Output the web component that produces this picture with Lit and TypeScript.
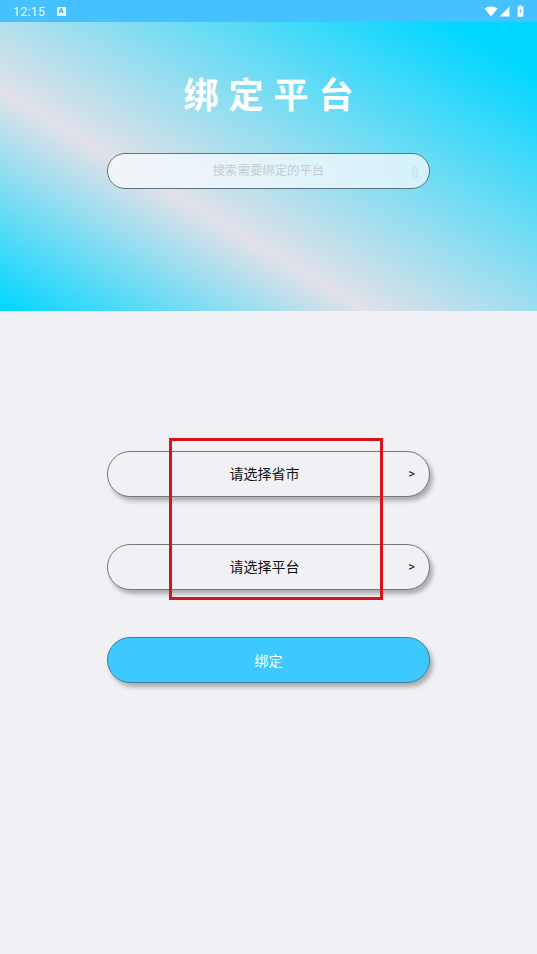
import { LitElement, html, css } from "lit";
import { customElement } from "lit/decorators.js";

@customElement("app-root")
export class AppRoot extends LitElement {
  static styles = css`
    :host {
      display: block;
      position: relative;
      width: 537px;
      height: 954px;
      overflow: hidden;
      background: #f0f0f5;
      font-family: "Noto Sans CJK SC", Roboto, sans-serif;
    }
    .status {
      height: 22px;
      box-sizing: border-box;
      background: #45c1ff;
      display: flex;
      align-items: center;
      padding: 0 13px 0 13px;
      color: #eaf8ff;
      font-family: Roboto, sans-serif;
      font-size: 12.5px;
      letter-spacing: 0.2px;
    }
    .time { width: 43.5px; }
    .a-badge {
      width: 9px;
      height: 9px;
      border-radius: 1px;
      background: #e6f6ff;
      color: #45a0d8;
      font-size: 7px;
      font-weight: 700;
      letter-spacing: 0;
      line-height: 9px;
      text-align: center;
    }
    .status-icons {
      margin-left: auto;
      display: flex;
      align-items: center;
    }
    .status-icons svg { display: block; }
    .signal { margin-left: 1px; }
    .battery { margin-left: 7px; }
    .hero {
      height: 289px;
      box-sizing: border-box;
      padding-top: 48px;
      background: linear-gradient(31deg, #00d6ff 0%, #e1e1e8 36%, #00d6ff 92%);
      display: flex;
      flex-direction: column;
      align-items: center;
    }
    .title {
      margin: 0;
      color: #fff;
      font-size: 35px;
      line-height: 46px;
      font-weight: 700;
      letter-spacing: 10px;
      padding-left: 10px;
    }
    .search {
      margin-top: 37px;
      position: relative;
      width: 323px;
      height: 36px;
      box-sizing: border-box;
      border: 1px solid #5f7480;
      border-radius: 18px;
      background: linear-gradient(90deg, rgba(243, 246, 250, 0.92), rgba(225, 245, 253, 0.88));
      display: flex;
      align-items: center;
      justify-content: center;
      color: #c6ccd4;
      font-size: 12.4px;
      padding-bottom: 3px;
    }
    .tofu {
      position: absolute;
      right: 11px;
      top: 13px;
      display: block;
    }
    .main {
      padding-top: 140px;
      display: flex;
      flex-direction: column;
      align-items: center;
      gap: 47px;
    }
    .pill {
      position: relative;
      width: 323px;
      height: 46px;
      box-sizing: border-box;
      border: 1px solid #77777b;
      border-radius: 23px;
      box-shadow: 3px 4px 4px #adadb1;
      background: #f0f0f5;
      display: flex;
      align-items: center;
      justify-content: center;
      color: #111;
      font-size: 14px;
    }
    .pill .label { margin: 0 8px 2px 0; }
    .arrow {
      position: absolute;
      right: 14px;
      top: 13px;
      font-family: Roboto, sans-serif;
      font-size: 13px;
      line-height: 18px;
      font-weight: 400;
      color: #111;
    }
    .bind {
      background: #3dc8ff;
      border-color: #3c7f9e;
      color: #fff;
    }
    .bind .label { margin: 0; }
    .mark {
      position: absolute;
      left: 169px;
      top: 438px;
      width: 214px;
      height: 162px;
      box-sizing: border-box;
      border: 3px solid #d3141b;
      pointer-events: none;
    }
  `;

  render() {
    return html`
      <div class="status">
        <span class="time">12:15</span>
        <span class="a-badge">A</span>
        <span class="status-icons">
          <svg width="14" height="11" viewBox="0 0 14 11"><path d="M0.5 2.6C2.3 1.1 4.5 0.4 7 0.4s4.7 0.7 6.5 2.2L7 10.6z" fill="#fff"/></svg>
          <svg class="signal" width="11" height="11" viewBox="0 0 11 11"><path d="M10.5 0.5V10.5H0.5z" fill="#f2fbff"/></svg>
          <svg class="battery" width="7" height="12" viewBox="0 0 7 12"><path d="M2 0.5h3v1h1.4v10.3H0.6V1.5H2z" fill="#f2fbff"/><path d="M3.9 3L2.2 6.7h1.3L3 9.3l1.8-3.6H3.5z" fill="#45c1ff"/></svg>
        </span>
      </div>
      <section class="hero">
        <h1 class="title">绑定平台</h1>
        <div class="search">
          <span>搜索需要绑定的平台</span>
          <svg class="tofu" width="6" height="11" viewBox="0 0 6 11"><rect x="0.7" y="0.7" width="4.6" height="9.6" rx="1" fill="none" stroke="#c9dbe4" stroke-width="1"/><path d="M1 1.5L5 9.5M5 1.5L1 9.5" stroke="#d3e2ea" stroke-width="0.7"/></svg>
        </div>
      </section>
      <main class="main">
        <div class="pill"><span class="label">请选择省市</span><span class="arrow">&gt;</span></div>
        <div class="pill"><span class="label">请选择平台</span><span class="arrow">&gt;</span></div>
        <div class="pill bind"><span class="label">绑定</span></div>
      </main>
      <div class="mark"></div>
    `;
  }
}
